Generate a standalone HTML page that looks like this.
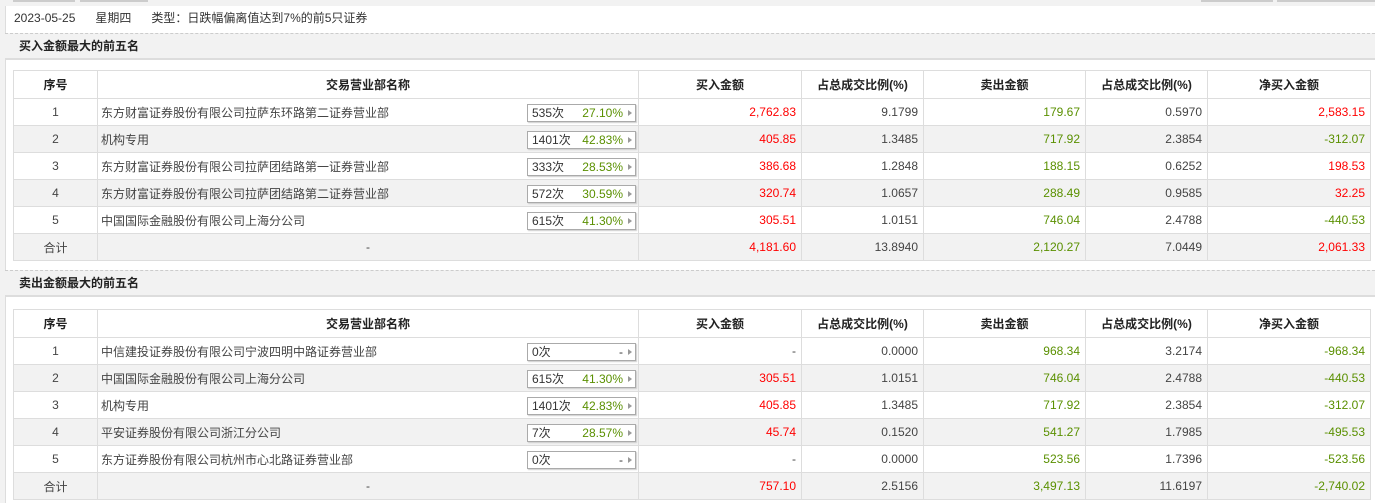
<!DOCTYPE html>
<html><head><meta charset="utf-8"><style>
*{margin:0;padding:0;box-sizing:border-box}
body{width:1375px;height:503px;overflow:hidden;background:#f2f2f2;font-family:"Liberation Sans","Noto Sans CJK SC",sans-serif;font-size:12px;color:#444;position:relative}
.main{position:absolute;left:5px;top:6px;width:1370px;height:497px;background:#fff;border-left:1px solid #ddd}
.btn{position:absolute;top:0;height:2px;background:#ccc}
.top{position:absolute;left:14px;top:6px;height:27px;line-height:25px;color:#333}
.sec{position:absolute;left:5px;width:1370px;height:27px;background:#f2f2f2;border-top:1px dashed #ccc;border-bottom:2px solid #ddd;font-weight:bold;line-height:25px;padding-left:14px;color:#222}
table{position:absolute;left:13px;width:1357px;border-collapse:collapse;table-layout:fixed}
td,th{border:1px solid #ddd;height:27px;padding:0 5px;white-space:nowrap;overflow:hidden}
th{height:28px;font-weight:bold;text-align:center;color:#222;background:#fff}
tr:nth-child(odd) td{background:#f2f2f2}
td.c{text-align:center}
td.r{text-align:right}
td.nm{padding-left:3px}
.red{color:#f00}.grn{color:#5a9000}
.nm{position:relative}
.bd{position:absolute;left:429px;top:5px;width:109px;height:18px;border:1px solid #aaa;box-shadow:1px 1px 1px #ccc;background:#fff;line-height:16px;padding-left:4px;color:#333}
.bd b{font-weight:normal;color:#5a9000;position:absolute;right:12px}
.bd i{position:absolute;right:3px;top:5px;border-left:4px solid #999;border-top:3px solid transparent;border-bottom:3px solid transparent}
</style></head><body>
<div class="btn" style="left:13px;width:62px"></div><div class="btn" style="left:80px;width:68px"></div>
<div class="btn" style="left:1201px;width:72px"></div><div class="btn" style="left:1277px;width:98px"></div>
<div class="main"></div>
<div class="top">2023-05-25&nbsp;&nbsp;&nbsp;&nbsp;&nbsp;&nbsp;星期四&nbsp;&nbsp;&nbsp;&nbsp;&nbsp;&nbsp;类型：日跌幅偏离值达到7%的前5只证券</div>
<div class="sec" style="top:33px">买入金额最大的前五名</div>
<table style="top:70px">
<colgroup><col style="width:84px"><col style="width:541px"><col style="width:163px"><col style="width:122px"><col style="width:162px"><col style="width:122px"><col style="width:163px"></colgroup>
<tr><th>序号</th><th>交易营业部名称</th><th>买入金额</th><th>占总成交比例(%)</th><th>卖出金额</th><th>占总成交比例(%)</th><th>净买入金额</th></tr>
<tr><td class="c">1</td><td class="nm">东方财富证券股份有限公司拉萨东环路第二证券营业部<span class="bd">535次<b>27.10%</b><i></i></span></td><td class="r red">2,762.83</td><td class="r">9.1799</td><td class="r grn">179.67</td><td class="r">0.5970</td><td class="r red">2,583.15</td></tr>
<tr><td class="c">2</td><td class="nm">机构专用<span class="bd">1401次<b>42.83%</b><i></i></span></td><td class="r red">405.85</td><td class="r">1.3485</td><td class="r grn">717.92</td><td class="r">2.3854</td><td class="r grn">-312.07</td></tr>
<tr><td class="c">3</td><td class="nm">东方财富证券股份有限公司拉萨团结路第一证券营业部<span class="bd">333次<b>28.53%</b><i></i></span></td><td class="r red">386.68</td><td class="r">1.2848</td><td class="r grn">188.15</td><td class="r">0.6252</td><td class="r red">198.53</td></tr>
<tr><td class="c">4</td><td class="nm">东方财富证券股份有限公司拉萨团结路第二证券营业部<span class="bd">572次<b>30.59%</b><i></i></span></td><td class="r red">320.74</td><td class="r">1.0657</td><td class="r grn">288.49</td><td class="r">0.9585</td><td class="r red">32.25</td></tr>
<tr><td class="c">5</td><td class="nm">中国国际金融股份有限公司上海分公司<span class="bd">615次<b>41.30%</b><i></i></span></td><td class="r red">305.51</td><td class="r">1.0151</td><td class="r grn">746.04</td><td class="r">2.4788</td><td class="r grn">-440.53</td></tr>
<tr><td class="c">合计</td><td class="c">-</td><td class="r red">4,181.60</td><td class="r">13.8940</td><td class="r grn">2,120.27</td><td class="r">7.0449</td><td class="r red">2,061.33</td></tr>
</table>
<div class="sec" style="top:270px">卖出金额最大的前五名</div>
<table style="top:309px">
<colgroup><col style="width:84px"><col style="width:541px"><col style="width:163px"><col style="width:122px"><col style="width:162px"><col style="width:122px"><col style="width:163px"></colgroup>
<tr><th>序号</th><th>交易营业部名称</th><th>买入金额</th><th>占总成交比例(%)</th><th>卖出金额</th><th>占总成交比例(%)</th><th>净买入金额</th></tr>
<tr><td class="c">1</td><td class="nm">中信建投证券股份有限公司宁波四明中路证券营业部<span class="bd">0次<b style="color:#333">-</b><i></i></span></td><td class="r">-</td><td class="r">0.0000</td><td class="r grn">968.34</td><td class="r">3.2174</td><td class="r grn">-968.34</td></tr>
<tr><td class="c">2</td><td class="nm">中国国际金融股份有限公司上海分公司<span class="bd">615次<b>41.30%</b><i></i></span></td><td class="r red">305.51</td><td class="r">1.0151</td><td class="r grn">746.04</td><td class="r">2.4788</td><td class="r grn">-440.53</td></tr>
<tr><td class="c">3</td><td class="nm">机构专用<span class="bd">1401次<b>42.83%</b><i></i></span></td><td class="r red">405.85</td><td class="r">1.3485</td><td class="r grn">717.92</td><td class="r">2.3854</td><td class="r grn">-312.07</td></tr>
<tr><td class="c">4</td><td class="nm">平安证券股份有限公司浙江分公司<span class="bd">7次<b>28.57%</b><i></i></span></td><td class="r red">45.74</td><td class="r">0.1520</td><td class="r grn">541.27</td><td class="r">1.7985</td><td class="r grn">-495.53</td></tr>
<tr><td class="c">5</td><td class="nm">东方证券股份有限公司杭州市心北路证券营业部<span class="bd">0次<b style="color:#333">-</b><i></i></span></td><td class="r">-</td><td class="r">0.0000</td><td class="r grn">523.56</td><td class="r">1.7396</td><td class="r grn">-523.56</td></tr>
<tr><td class="c">合计</td><td class="c">-</td><td class="r red">757.10</td><td class="r">2.5156</td><td class="r grn">3,497.13</td><td class="r">11.6197</td><td class="r grn">-2,740.02</td></tr>
</table>
</body></html>
